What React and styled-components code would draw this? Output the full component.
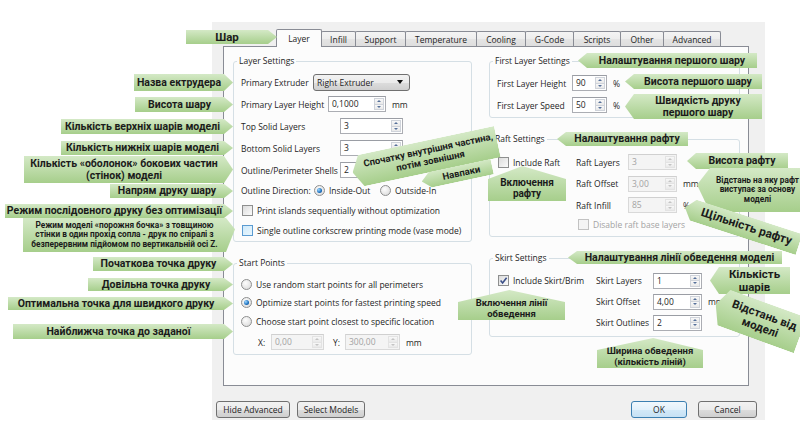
import React from "react";
import styled, { createGlobalStyle } from "styled-components";

const GlobalStyle = createGlobalStyle`
  html, body { margin: 0; padding: 0; background: #fff; }
  body { font-family: "Open Sans", "Noto Sans", sans-serif; }
`;

const Page = styled.div`
  position: relative;
  width: 800px;
  height: 426px;
  overflow: hidden;
  background: #fff;
`;

const Dialog = styled.div`
  margin: 22px 0 0 212px;
  width: 553px;
  height: 398px;
  box-sizing: border-box;
  padding: 7px 8px 2px 4px;
  background: #f0f0f0;
  font-size: 8.5px;
  color: #1e1e1e;
  display: flex;
  flex-direction: column;
`;

const TabArea = styled.div`
  margin: 0 0 0 7px;
  width: 526px;
  display: flex;
  flex-direction: column;
`;

const TabBar = styled.div`
  display: flex;
  align-items: flex-end;
  height: 17px;
  padding-left: 54px;
`;

const Tab = styled.div`
  box-sizing: border-box;
  width: ${(p) => p.$w + 1}px;
  height: ${(p) => (p.$active ? 18 : 15)}px;
  margin-bottom: ${(p) => (p.$active ? -1 : 0)}px;
  margin-left: -1px;
  border: 1px solid #898c95;
  border-bottom: none;
  border-radius: 2px 2px 0 0;
  background: ${(p) =>
    p.$active ? "#fcfcfc" : "linear-gradient(#f4f4f4, #ededed 50%, #e4e4e4 51%, #dedede)"};
  position: relative;
  z-index: ${(p) => (p.$active ? 2 : 1)};
  display: flex;
  align-items: center;
  justify-content: center;
  white-space: nowrap;
`;

const Pane = styled.div`
  height: 340px;
  box-sizing: border-box;
  border: 1px solid #898c95;
  background: #fcfcfc;
  padding: 8px 8px 0 9px;
  display: grid;
  grid-template-columns: 239px 251px;
  column-gap: 17px;
  align-items: start;
`;

const Column = styled.div`
  display: flex;
  flex-direction: column;
  gap: 15px;
`;

const Group = styled.fieldset`
  margin: 0;
  min-width: 0;
  box-sizing: border-box;
  height: ${(p) => p.$h}px;
  padding: ${(p) => p.$pt}px 7px 0 7px;
  border: 1px solid #d5dfe5;
  border-radius: 3px;
`;

const Legend = styled.legend`
  padding: 0 2px;
  margin-left: -4px;
  line-height: 12px;
  font-size: 8.5px;
`;

const Row = styled.div`
  display: flex;
  align-items: center;
  height: ${(p) => p.$h || 22}px;
  padding-left: ${(p) => p.$pl || 0}px;
`;

const Label = styled.span`
  flex: none;
  width: ${(p) => (p.$w ? p.$w + "px" : "auto")};
  margin-left: ${(p) => p.$ml || 0}px;
  white-space: nowrap;
`;

const OptionText = styled.span`
  flex: none;
  width: ${(p) => (p.$w ? p.$w + "px" : "auto")};
  margin-left: 4px;
  white-space: nowrap;
  color: ${(p) => (p.$disabled ? "#a3a3a3" : "inherit")};
`;

const Unit = styled.span`
  margin-left: 6px;
`;

const SpinFrame = styled.div`
  flex: none;
  box-sizing: border-box;
  display: flex;
  width: ${(p) => p.$w}px;
  height: 16px;
  border: 1px solid ${(p) => (p.$disabled ? "#d9d9d9" : "#abadb3")};
  border-top-color: ${(p) => (p.$disabled ? "#d0d0d0" : "#9a9da4")};
  background: ${(p) => (p.$disabled ? "#f4f4f4" : "#fff")};
`;

const SpinValue = styled.span`
  flex: 1;
  padding-left: 3px;
  line-height: 14px;
  color: ${(p) => (p.$disabled ? "#a3a3a3" : "#1e1e1e")};
`;

const SpinButtons = styled.div`
  width: 10px;
  display: flex;
  flex-direction: column;
  padding: 1px 1px 1px 0;
`;

const SpinButton = styled.div`
  flex: 1;
  border: 1px solid ${(p) => (p.$disabled ? "#e3e3e3" : "#cfd3da")};
  margin-top: ${(p) => (p.$down ? -1 : 0)}px;
  background: linear-gradient(#f8f8f8, #e9e9e9);
  display: flex;
  align-items: center;
  justify-content: center;
  &::after {
    content: "";
    border-left: 2.5px solid transparent;
    border-right: 2.5px solid transparent;
    ${(p) => (p.$down ? "border-top" : "border-bottom")}: 2.5px solid
      ${(p) => (p.$disabled ? "#c4c4c4" : "#56709a")};
  }
`;

const Combo = styled.div`
  flex: none;
  box-sizing: border-box;
  width: 97px;
  height: 17px;
  border: 1px solid #707070;
  border-radius: 3px;
  background: linear-gradient(#f2f2f2 0%, #ebebeb 50%, #dddddd 51%, #cfcfcf 100%);
  display: flex;
  align-items: center;
  justify-content: space-between;
  padding: 0 6px 0 3px;
  &::after {
    content: "";
    border-left: 3.5px solid transparent;
    border-right: 3.5px solid transparent;
    border-top: 4px solid #111;
  }
`;

const Radio = styled.span`
  flex: none;
  box-sizing: border-box;
  width: 11px;
  height: 11px;
  border-radius: 50%;
  border: 1px solid #8e8f8f;
  background: radial-gradient(circle at 40% 35%, #fdfdfd, #d6d6d6);
  display: flex;
  align-items: center;
  justify-content: center;
  &::after {
    content: "";
    display: ${(p) => (p.$checked ? "block" : "none")};
    width: 5px;
    height: 5px;
    border-radius: 50%;
    background: radial-gradient(circle at 35% 35%, #9fd8ff, #1c70bf 60%, #0d3f78);
  }
`;

const Check = styled.span`
  flex: none;
  box-sizing: border-box;
  width: 11px;
  height: 11px;
  margin-left: 1px;
  border: 1px solid ${(p) => (p.$hover ? "#5b9bd1" : p.$disabled ? "#c2c2c2" : "#8e8f8f")};
  background: ${(p) =>
    p.$hover
      ? "linear-gradient(135deg, #cfeafb, #e9f6fd)"
      : p.$disabled
      ? "#f4f4f4"
      : "linear-gradient(135deg, #dcdcdc, #fbfbfb)"};
  display: flex;
  align-items: center;
  justify-content: center;
`;

const FieldGrid = styled.div`
  display: grid;
  grid-template-columns: ${(p) => p.$cols};
  grid-template-rows: ${(p) => p.$rows};
  align-items: center;
`;

const Cell = styled.div`
  display: flex;
  align-items: center;
  grid-column: span ${(p) => p.$span || 1};
  padding-left: ${(p) => p.$pl || 0}px;
`;

const ButtonRow = styled.div`
  display: flex;
  margin-top: 15px;
  gap: 7px;
`;

const Button = styled.div`
  box-sizing: border-box;
  width: ${(p) => p.$w}px;
  height: 17px;
  margin-left: ${(p) => p.$ml || 0}px;
  border: 1px solid ${(p) => (p.$default ? "#3c7fb1" : "#707070")};
  border-radius: 3px;
  background: ${(p) =>
    p.$default
      ? "linear-gradient(#f1f8fd, #e3f1fb 50%, #d3e9f8 51%, #c6e1f4)"
      : "linear-gradient(#f2f2f2, #ebebeb 50%, #dddddd 51%, #cfcfcf)"};
  display: flex;
  align-items: center;
  justify-content: center;
`;

const Spacer = styled.div`
  flex: 1;
`;

const shapes = {
  right: (p) =>
    `polygon(0 0, calc(100% - ${p.$tip}px) 0, 100% ${p.$ty}%, calc(100% - ${p.$tip}px) 100%, 0 100%)`,
  left: (p) =>
    `polygon(${p.$tip}px 0, 100% 0, 100% 100%, ${p.$tip}px 100%, 0 ${p.$ty}%)`,
  up: (p) => `polygon(0 ${p.$roof}px, ${p.$apex}% 0, 100% ${p.$roof}px, 100% 100%, 0 100%)`,
};

const Callout = styled.div`
  position: absolute;
  z-index: 5;
  left: ${(p) => p.$x}px;
  top: ${(p) => p.$y}px;
  width: ${(p) => p.$w}px;
  height: ${(p) => p.$h}px;
  box-sizing: border-box;
  display: flex;
  align-items: center;
  justify-content: center;
  text-align: center;
  padding: ${(p) =>
    p.$dir === "right"
      ? `0 ${p.$tip}px 0 0`
      : p.$dir === "left"
      ? `0 0 0 ${p.$tip}px`
      : `${p.$roof - 4}px 0 0`};
  background: linear-gradient(#d4e9c6, #a6ce8b);
  clip-path: ${(p) => shapes[p.$dir](p)};
  transform: rotate(${(p) => p.$rot}deg);
  font-family: Roboto, "Noto Sans", sans-serif;
  font-weight: 700;
  font-size: ${(p) => p.$fs}px;
  line-height: 1.12;
  color: #1b1b1b;
  white-space: pre-line;
`;

const TABS = [
  ["Layer", 45],
  ["Infill", 34],
  ["Support", 50],
  ["Temperature", 71],
  ["Cooling", 49],
  ["G-Code", 48],
  ["Scripts", 47],
  ["Other", 43],
  ["Advanced", 57],
];

const CALLOUTS = [
  { t: "Шар", x: 186, y: 30, w: 91, h: 14, dir: "right", fs: 11.5 },
  { t: "Назва ектрудера", x: 134, y: 74, w: 99, h: 17, dir: "right" },
  { t: "Висота шару", x: 135, y: 97, w: 98, h: 15, dir: "right" },
  { t: "Кількість верхніх шарів моделі", x: 61, y: 119, w: 172, h: 15, dir: "right" },
  { t: "Кількість нижніх шарів моделі", x: 61, y: 141, w: 172, h: 14, dir: "right" },
  { t: "Кількість «оболонок» бокових частин\n(стінок) моделі", x: 24, y: 156, w: 209, h: 27, dir: "right" },
  { t: "Напрям друку шару", x: 110, y: 184, w: 123, h: 14, dir: "right" },
  { t: "Режим послідовного друку без оптимізації", x: 5, y: 204, w: 228, h: 14, dir: "right" },
  {
    t: "Режим моделі «порожня бочка» з товщиною\nстінки в один прохід сопла - друк по спіралі з\nбезперервним підйомом по вертикальній осі Z.",
    x: 23, y: 218, w: 212, h: 34, dir: "right", ty: 33, fs: 8.3,
  },
  { t: "Початкова точка друку", x: 93, y: 257, w: 140, h: 14, dir: "right" },
  { t: "Довільна точка друку", x: 88, y: 278, w: 145, h: 13, dir: "right" },
  { t: "Оптимальна точка для швидкого друку", x: 8, y: 297, w: 225, h: 13, dir: "right" },
  { t: "Найближча точка до заданої", x: 13, y: 324, w: 220, h: 15, dir: "right" },
  { t: "Налаштування першого шару", x: 578, y: 53, w: 179, h: 15, dir: "left" },
  { t: "Висота першого шару", x: 625, y: 74, w: 137, h: 15, dir: "left" },
  { t: "Швидкість друку\nпершого шару", x: 625, y: 94, w: 137, h: 25, dir: "left" },
  { t: "Налаштування рафту", x: 557, y: 132, w: 131, h: 14, dir: "left" },
  { t: "Висота рафту", x: 687, y: 153, w: 101, h: 16, dir: "left" },
  {
    t: "Відстань на яку рафт\nвиступає за основу\nмоделі",
    x: 697, y: 168, w: 108, h: 44, dir: "left", fs: 8.3, tip: 13, ty: 38,
  },
  { t: "Щільність рафту", x: 682, y: 215, w: 120, h: 22, dir: "left", rot: 18, fs: 12 },
  { t: "Включення\nрафту", x: 488, y: 166, w: 78, h: 35, dir: "up", roof: 13, apex: 44, fs: 10 },
  { t: "Налаштування лінії обведення моделі", x: 568, y: 251, w: 214, h: 13, dir: "left" },
  { t: "Включення лінії\nобведення", x: 458, y: 290, w: 107, h: 30, dir: "up", roof: 12, apex: 48, fs: 9.5 },
  { t: "Кількість\nшарів", x: 710, y: 267, w: 80, h: 27, dir: "left", fs: 11.5 },
  { t: "Відстань від\nмоделі", x: 713, y: 301, w: 90, h: 38, dir: "left", rot: 20, fs: 11.5 },
  { t: "Ширина обведення\n(кількість ліній)", x: 597, y: 338, w: 106, h: 30, dir: "up", roof: 12, apex: 53, fs: 9.5 },
  { t: "Спочатку внутрішня частина,\nпотім зовнішня", x: 351, y: 141, w: 148, h: 32, dir: "left", rot: -12, fs: 9.5 },
  { t: "Навпаки", x: 421, y: 166, w: 72, h: 16, dir: "left", rot: -12, fs: 9.5 },
];

function SpinBox({ w, value, disabled }) {
  return (
    <SpinFrame $w={w} $disabled={disabled}>
      <SpinValue $disabled={disabled}>{value}</SpinValue>
      <SpinButtons>
        <SpinButton $disabled={disabled} />
        <SpinButton $disabled={disabled} $down />
      </SpinButtons>
    </SpinFrame>
  );
}

function CheckMark() {
  return (
    <svg width="9" height="9" viewBox="0 0 9 9">
      <path d="M1.6 4.6 L3.6 6.9 L7.6 1.8" stroke="#3b4f88" strokeWidth="1.6" fill="none" />
    </svg>
  );
}

export default function App() {
  return (
    <Page>
      <GlobalStyle />
      <Dialog>
        <TabArea>
          <TabBar>
            {TABS.map(([name, w], i) => (
              <Tab key={name} $w={w} $active={i === 0}>
                {name}
              </Tab>
            ))}
          </TabBar>
          <Pane>
            <Column>
              <Group $h={187} $pt={4}>
                <Legend>Layer Settings</Legend>
                <Row>
                  <Label $w={72}>Primary Extruder</Label>
                  <Combo>Right Extruder</Combo>
                </Row>
                <Row>
                  <Label $w={87}>Primary Layer Height</Label>
                  <SpinBox w={58} value="0,1000" />
                  <Unit>mm</Unit>
                </Row>
                <Row>
                  <Label $w={99}>Top Solid Layers</Label>
                  <SpinBox w={63} value="3" />
                </Row>
                <Row>
                  <Label $w={99}>Bottom Solid Layers</Label>
                  <SpinBox w={63} value="3" />
                </Row>
                <Row>
                  <Label $w={99}>Outline/Perimeter Shells</Label>
                  <SpinBox w={63} value="2" />
                </Row>
                <Row $h={18}>
                  <Label $w={73}>Outline Direction:</Label>
                  <Radio $checked />
                  <OptionText $w={51}>Inside-Out</OptionText>
                  <Radio />
                  <OptionText>Outside-In</OptionText>
                </Row>
                <Row>
                  <Check />
                  <OptionText>Print islands sequentially without optimization</OptionText>
                </Row>
                <Row $h={19}>
                  <Check $hover />
                  <OptionText>Single outline corkscrew printing mode (vase mode)</OptionText>
                </Row>
              </Group>
              <Group $h={98} $pt={6}>
                <Legend>Start Points</Legend>
                <Row $h={18}>
                  <Radio />
                  <OptionText>Use random start points for all perimeters</OptionText>
                </Row>
                <Row $h={19}>
                  <Radio $checked />
                  <OptionText>Optimize start points for fastest printing speed</OptionText>
                </Row>
                <Row $h={19}>
                  <Radio />
                  <OptionText>Choose start point closest to specific location</OptionText>
                </Row>
                <Row $pl={17}>
                  <Label $w={13}>X:</Label>
                  <SpinBox w={53} value="0,00" disabled />
                  <Label $w={12} $ml={9}>Y:</Label>
                  <SpinBox w={55} value="300,00" disabled />
                  <Unit>mm</Unit>
                </Row>
              </Group>
            </Column>

            <Column>
              <Group $h={63} $pt={5}>
                <Legend>First Layer Settings</Legend>
                <Row>
                  <Label $w={75}>First Layer Height</Label>
                  <SpinBox w={35} value="90" />
                  <Unit>%</Unit>
                </Row>
                <Row>
                  <Label $w={75}>First Layer Speed</Label>
                  <SpinBox w={35} value="50" />
                  <Unit>%</Unit>
                </Row>
              </Group>
              <Group $h={104} $pt={6}>
                <Legend>Raft Settings</Legend>
                <FieldGrid $cols="79px 52px 49px auto" $rows="22px 21px 22px 17px">
                  <Cell>
                    <Check />
                    <OptionText>Include Raft</OptionText>
                  </Cell>
                  <Cell>Raft Layers</Cell>
                  <SpinBox w={49} value="3" disabled />
                  <Cell />
                  <Cell />
                  <Cell>Raft Offset</Cell>
                  <SpinBox w={49} value="3,00" disabled />
                  <Unit>mm</Unit>
                  <Cell />
                  <Cell>Raft Infill</Cell>
                  <SpinBox w={49} value="85" disabled />
                  <Unit>%</Unit>
                  <Cell />
                  <Cell $span={3} $pl={1}>
                    <Check $disabled />
                    <OptionText $disabled>Disable raft base layers</OptionText>
                  </Cell>
                </FieldGrid>
              </Group>
              <Group $h={85} $pt={6}>
                <Legend>Skirt Settings</Legend>
                <FieldGrid $cols="99px 57px 49px auto" $rows="21px 21px 21px">
                  <Cell>
                    <Check>
                      <CheckMark />
                    </Check>
                    <OptionText>Include Skirt/Brim</OptionText>
                  </Cell>
                  <Cell>Skirt Layers</Cell>
                  <SpinBox w={49} value="1" />
                  <Cell />
                  <Cell />
                  <Cell>Skirt Offset</Cell>
                  <SpinBox w={49} value="4,00" />
                  <Unit>mm</Unit>
                  <Cell />
                  <Cell>Skirt Outlines</Cell>
                  <SpinBox w={49} value="2" />
                  <Cell />
                </FieldGrid>
              </Group>
            </Column>
          </Pane>
        </TabArea>
        <ButtonRow>
          <Button $w={74}>Hide Advanced</Button>
          <Button $w={68}>Select Models</Button>
          <Spacer />
          <Button $w={56} $default>
            OK
          </Button>
          <Button $w={59} $ml={4}>
            Cancel
          </Button>
        </ButtonRow>
      </Dialog>

      {CALLOUTS.map((c) => (
        <Callout
          key={c.t}
          $x={c.x}
          $y={c.y}
          $w={c.w}
          $h={c.h}
          $dir={c.dir}
          $tip={c.tip || 9}
          $ty={c.ty || 50}
          $roof={c.roof || 0}
          $apex={c.apex || 50}
          $rot={c.rot || 0}
          $fs={c.fs || 10.5}
        >
          {c.t}
        </Callout>
      ))}
    </Page>
  );
}
